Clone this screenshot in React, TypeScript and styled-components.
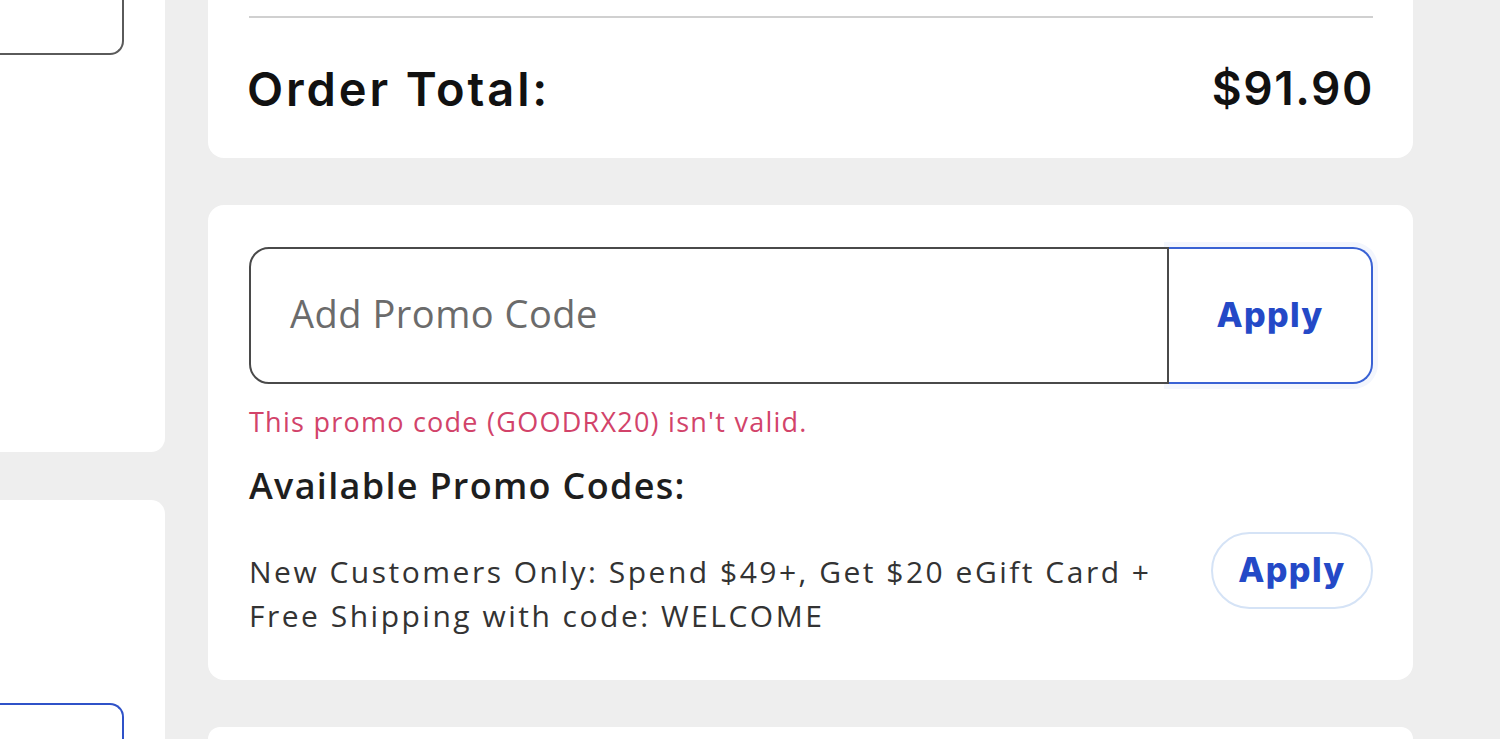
import React from "react";
import styled, { createGlobalStyle } from "styled-components";

const Global = createGlobalStyle`
  html, body { margin: 0; padding: 0; background: #eeeeee; }
  body { width: 1500px; height: 739px; overflow: hidden; font-family: "Open Sans", "Noto Sans", sans-serif; }
  * { box-sizing: border-box; }
`;

const Page = styled.div`
  display: grid;
  grid-template-columns: 165px 1205px;
  column-gap: 43px;
  height: 739px;
  overflow: hidden;
`;

const Column = styled.div<{ $gap: number }>`
  display: flex;
  flex-direction: column;
  gap: ${(p) => p.$gap}px;
  min-height: 0;
`;

const LeftCard = styled.div<{ $height?: number; $radius: string }>`
  background: #fff;
  border-radius: ${(p) => p.$radius};
  ${(p) => (p.$height ? `height: ${p.$height}px; flex: none;` : "flex: 1;")}
  padding-right: 41px;
`;

const FieldStub = styled.div<{ $blue?: boolean }>`
  height: 55px;
  border: 2px solid ${(p) => (p.$blue ? "#2f52c8" : "#5a5a5a")};
  border-left: none;
  ${(p) =>
    p.$blue
      ? `border-bottom: none; border-radius: 0 14px 0 0; margin-top: 203px; height: 60px;`
      : `border-top: none; border-radius: 0 0 14px 0;`}
`;

const Card = styled.div<{ $height?: number; $radius?: string }>`
  background: #fff;
  border-radius: ${(p) => p.$radius ?? "16px"};
  ${(p) => (p.$height ? `height: ${p.$height}px;` : "flex: 1;")}
  flex-shrink: 0;
  padding: 0 40px 0 41px;
`;

const Divider = styled.div`
  margin-top: 16px;
  height: 2px;
  background: #d0d0d0;
`;

const TotalRow = styled.div`
  display: flex;
  justify-content: space-between;
  align-items: center;
  height: 140px;
  font-family: "Inter", "Liberation Sans", sans-serif;
  font-weight: 600;
  color: #111;
`;

const TotalLabel = styled.span`
  font-size: 47px;
  letter-spacing: 2.9px;
  margin-left: -2px;
`;

const TotalValue = styled.span`
  font-size: 46px;
  letter-spacing: 1.6px;
  margin-right: -1px;
`;

const PromoCard = styled(Card)`
  padding-top: 42px;
`;

const InputGroup = styled.div`
  display: flex;
  height: 137px;
`;

const CodeInput = styled.div`
  flex: 1;
  position: relative;
  z-index: 1;
  background: #fff;
  border: 2px solid #4a4a4a;
  border-radius: 20px 0 0 20px;
  display: flex;
  align-items: center;
  padding: 0 0 6px 39px;
  font-size: 38px;
  letter-spacing: 0.5px;
  color: #6b6b6b;
`;

const ApplyBox = styled.button`
  width: 204px;
  border: 2px solid #3a62d4;
  border-left: none;
  border-radius: 0 20px 20px 0;
  background: #fff;
  box-shadow: 0 0 0 5px #f3f6fd;
  display: flex;
  align-items: center;
  justify-content: center;
  padding: 0 0 2px;
  font-family: "Inter", "Liberation Sans", sans-serif;
  font-weight: 800;
  font-size: 34px;
  letter-spacing: 1.3px;
  color: #2449c7;
  cursor: pointer;
`;

const ErrorText = styled.div`
  margin-top: 22px;
  font-size: 27px;
  line-height: 32px;
  letter-spacing: 1.25px;
  color: #d2436a;
`;

const Heading = styled.div`
  margin-top: 26px;
  font-size: 36px;
  font-weight: 600;
  line-height: 44px;
  letter-spacing: 1.3px;
  color: #1e1e1e;
`;

const OfferRow = styled.div`
  margin-top: 24px;
  display: flex;
  justify-content: space-between;
  align-items: flex-start;
`;

const OfferText = styled.div`
  width: 930px;
  padding-top: 18px;
  font-size: 30px;
  line-height: 44px;
  letter-spacing: 2.5px;
  color: #333;
`;

const PillButton = styled.button`
  width: 162px;
  height: 77px;
  border: 2px solid #d5e3f6;
  border-radius: 40px;
  background: #fff;
  font-family: "Inter", "Liberation Sans", sans-serif;
  font-weight: 800;
  font-size: 34px;
  letter-spacing: 1.4px;
  color: #2449c7;
  padding: 0 0 2px;
  cursor: pointer;
`;

export default function App() {
  return (
    <>
      <Global />
      <Page>
        <Column $gap={48}>
          <LeftCard $height={452} $radius="0 0 14px 0">
            <FieldStub />
          </LeftCard>
          <LeftCard $radius="0 14px 0 0">
            <FieldStub $blue />
          </LeftCard>
        </Column>
        <Column $gap={47}>
          <Card $height={158} $radius="0 0 16px 16px">
            <Divider />
            <TotalRow>
              <TotalLabel>Order Total:</TotalLabel>
              <TotalValue>$91.90</TotalValue>
            </TotalRow>
          </Card>
          <PromoCard $height={475}>
            <InputGroup>
              <CodeInput>Add Promo Code</CodeInput>
              <ApplyBox>Apply</ApplyBox>
            </InputGroup>
            <ErrorText>This promo code (GOODRX20) isn't valid.</ErrorText>
            <Heading>Available Promo Codes:</Heading>
            <OfferRow>
              <OfferText>
                New Customers Only: Spend $49+, Get $20 eGift Card + Free Shipping with code: WELCOME
              </OfferText>
              <PillButton>Apply</PillButton>
            </OfferRow>
          </PromoCard>
          <Card $radius="16px 16px 0 0" />
        </Column>
      </Page>
    </>
  );
}
